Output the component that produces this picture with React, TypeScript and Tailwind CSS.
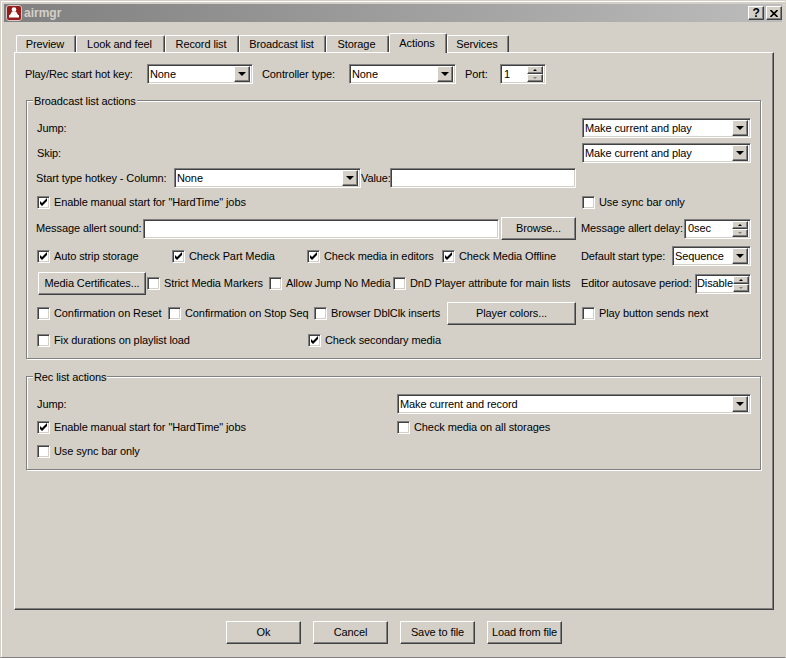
import React, { FC, ReactNode } from 'react';

const sunken =
	'border border-t-[#808080] border-l-[#808080] border-r-white border-b-white shadow-[inset_1px_1px_0_#404040,inset_-1px_-1px_0_#d4d0c8]';
const raised =
	'border border-t-white border-l-white border-r-[#404040] border-b-[#404040] shadow-[inset_-1px_-1px_0_#808080] bg-[#d4d0c8]';

const ArrowButton: FC = () => (
	<span className={`${raised} w-[16px] h-[16px] mr-[2px] flex items-center justify-center shrink-0`}>
		<span className="w-0 h-0 border-x-[4px] border-x-transparent border-t-[4px] border-t-black" />
	</span>
);

const Combo: FC<{ value: string; width: string }> = ({ value, width }) => (
	<div className={`${sunken} ${width} h-[20px] bg-white flex items-center justify-between shrink-0`}>
		<span className="pl-[2px] truncate">{value}</span>
		<ArrowButton />
	</div>
);

const Spin: FC<{ value: string; width: string; tight?: boolean }> = ({ value, width, tight }) => (
	<div className={`${sunken} ${width} h-[20px] bg-white flex items-center justify-between shrink-0`}>
		<span className={tight ? 'pl-[1px]' : 'pl-[3px]'}>{value}</span>
		<span className="flex flex-col mr-[2px] w-[16px] h-[16px] shrink-0">
			<span className={`${raised} h-[8px] flex items-center justify-center`}>
				<span className="w-0 h-0 border-x-[2px] border-x-transparent border-b-[2px] border-b-black" />
			</span>
			<span className={`${raised} h-[8px] flex items-center justify-center`}>
				<span className="w-0 h-0 border-x-[2px] border-x-transparent border-t-[2px] border-t-[#808080]" />
			</span>
		</span>
	</div>
);

const Input: FC<{ width: string }> = ({ width }) => (
	<div className={`${sunken} ${width} h-[20px] bg-white shrink-0`} />
);

const Button: FC<{ label: string; width: string; extra?: string }> = ({ label, width, extra }) => (
	<button className={`${raised} ${width} ${extra ?? ''} h-[23px] flex items-center justify-center shrink-0 text-black`}>
		{label}
	</button>
);

const Check: FC<{ label: string; width?: string; checked?: boolean }> = ({ label, width, checked }) => (
	<label className={`${width ?? ''} flex items-center shrink-0 whitespace-nowrap`}>
		<span className={`${sunken} ml-[1px] mr-[4px] w-[13px] h-[13px] bg-white flex items-center justify-center shrink-0`}>
			{checked && (
				<svg width="9" height="9" viewBox="0 0 9 9">
					<path d="M1 3 V6 L3 8 L8 3 V0 L3 5 Z" fill="black" />
				</svg>
			)}
		</span>
		{label}
	</label>
);

const Label: FC<{ width: string; children: ReactNode }> = ({ width, children }) => (
	<span className={`${width} shrink-0 whitespace-nowrap`}>{children}</span>
);

const Group: FC<{ title: string; height: string; margin: string; children: ReactNode }> = ({
	title,
	height,
	margin,
	children,
}) => (
	<div
		className={`relative ${height} ${margin} ml-[11px] w-[735px] pl-[9px] border border-[#808080] shadow-[inset_1px_1px_0_white,1px_1px_0_white] flex flex-col`}
	>
		<span className="absolute left-[6px] -top-[7px] bg-[#d4d0c8] px-[1px] leading-[14px]">{title}</span>
		{children}
	</div>
);

const tabs = [
	{ name: 'Preview', width: 'w-[60px]' },
	{ name: 'Look and feel', width: 'w-[89px]' },
	{ name: 'Record list', width: 'w-[74px]' },
	{ name: 'Broadcast list', width: 'w-[87px]' },
	{ name: 'Storage', width: 'w-[63px]' },
	{ name: 'Actions', width: 'w-[58px]', active: true },
	{ name: 'Services', width: 'w-[62px]' },
];

const App: FC = () => {
	return (
		<div className="w-[786px] h-[658px] bg-[#d4d0c8] text-[11px] tracking-[-0.1px] text-black font-['Liberation_Sans',sans-serif] border border-t-[#d4d0c8] border-l-[#d4d0c8] border-r-[#d4d0c8] border-b-[#808080] shadow-[inset_1px_1px_0_white] p-[3px] overflow-hidden">
			{/* title bar */}
			<div className="h-[18px] bg-gradient-to-r from-[#808080] to-[#bcbcbc] flex items-center justify-between">
				<div className="flex items-center">
					<svg width="16" height="16" viewBox="0 0 16 16" className="ml-[2px]">
						<rect x="0.5" y="0.5" width="15" height="15" rx="2.5" fill="#961c1c" stroke="#d8c8c8" />
						<circle cx="8" cy="4.5" r="2.3" fill="white" />
						<path d="M6 6.5 H10 L12 10 H4 Z" fill="white" />
						<rect x="3" y="10" width="10" height="2.5" fill="white" />
					</svg>
					<span className="ml-[2px] font-bold text-[#d4d0c8] text-[12px] tracking-normal">airmgr</span>
				</div>
				<div className="flex items-center">
					<span className={`${raised} w-[16px] h-[14px] flex items-center justify-center font-bold text-[12px]`}>?</span>
					<span className={`${raised} w-[16px] h-[14px] ml-[2px] flex items-center justify-center`}>
						<svg width="8" height="7" viewBox="0 0 8 7">
							<path d="M0.5 0 L7.5 7 M7.5 0 L0.5 7" stroke="black" strokeWidth="1.6" />
						</svg>
					</span>
				</div>
			</div>

			{/* tabs */}
			<div className="mt-[11px] ml-[12px] h-[20px] flex items-end">
				{tabs.map((t) => (
					<div
						key={t.name}
						className={`${t.width} ${
							t.active ? 'h-[20px] relative z-10' : 'h-[17px] mb-[1px]'
						} shrink-0 pr-[2px] bg-[#d4d0c8] border-t border-l border-t-white border-l-white border-r border-r-[#404040] rounded-t-[2px] shadow-[inset_-1px_0_0_#808080] flex items-center justify-center`}
					>
						{t.name}
					</div>
				))}
			</div>

			{/* pane */}
			<div className="-mt-[1px] ml-[10px] w-[760px] h-[558px] border border-t-white border-l-white border-r-[#404040] border-b-[#404040] shadow-[inset_-1px_-1px_0_#808080] flex flex-col">
				<div className="mt-[11px] ml-[10px] h-[20px] flex items-center">
					<Label width="w-[122px]">Play/Rec start hot key:</Label>
					<Combo value="None" width="w-[106px]" />
					<Label width="w-[96px] pl-[9px]">Controller type:</Label>
					<Combo value="None" width="w-[107px]" />
					<Label width="w-[44px] pl-[9px]">Port:</Label>
					<Spin value="1" width="w-[46px]" />
				</div>

				<Group title="Broadcast list actions" height="h-[259px]" margin="mt-[16px]">
					<div className="mt-[17px] h-[20px] flex items-center">
						<Label width="w-[546px] pl-[1px]">Jump:</Label>
						<Combo value="Make current and play" width="w-[169px]" />
					</div>
					<div className="mt-[5px] h-[20px] flex items-center">
						<Label width="w-[546px] pl-[1px]">Skip:</Label>
						<Combo value="Make current and play" width="w-[169px]" />
					</div>
					<div className="mt-[5px] h-[20px] flex items-center">
						<Label width="w-[138px]">Start type hotkey - Column:</Label>
						<Combo value="None" width="w-[187px]" />
						<Label width="w-[29px]">Value:</Label>
						<Input width="w-[186px]" />
					</div>
					<div className="mt-[4px] h-[20px] flex items-center">
						<Check label={'Enable manual start for "HardTime" jobs'} width="w-[545px]" checked />
						<Check label="Use sync bar only" />
					</div>
					<div className="mt-[5px] h-[23px] flex items-center">
						<Label width="w-[107px]">Message allert sound:</Label>
						<Input width="w-[356px]" />
						<Button label="Browse..." width="w-[75px]" extra="ml-[2px]" />
						<Label width="w-[103px] ml-[5px]">Message allert delay:</Label>
						<Spin value="0sec" width="w-[67px]" />
					</div>
					<div className="mt-[6px] h-[20px] flex items-center">
						<Check label="Auto strip storage" width="w-[135px]" checked />
						<Check label="Check Part Media" width="w-[135px]" checked />
						<Check label="Check media in editors" width="w-[135px]" checked />
						<Check label="Check Media Offline" width="w-[135px]" checked />
						<Label width="w-[91px] ml-[5px]">Default start type:</Label>
						<Combo value="Sequence" width="w-[79px]" />
					</div>
					<div className="mt-[6px] h-[23px] flex items-center">
						<Button label="Media Certificates..." width="w-[108px]" extra="ml-[2px]" />
						<Check label="Strict Media Markers" width="w-[122px]" />
						<Check label="Allow Jump No Media" width="w-[124px]" />
						<Check label="DnD Player attribute for main lists" width="w-[189px]" />
						<Label width="w-[114px]">Editor autosave period:</Label>
						<Spin value="Disable" width="w-[56px]" tight />
					</div>
					<div className="mt-[7px] h-[23px] flex items-center">
						<Check label="Confirmation on Reset" width="w-[131px]" />
						<Check label="Confirmation on Stop Seq" width="w-[146px]" />
						<Check label="Browser DblClk inserts" width="w-[134px]" />
						<Button label="Player colors..." width="w-[129px]" />
						<div className="ml-[5px]">
							<Check label="Play button sends next" />
						</div>
					</div>
					<div className="mt-[5px] h-[20px] flex items-center">
						<Check label="Fix durations on playlist load" width="w-[271px]" />
						<Check label="Check secondary media" checked />
					</div>
				</Group>

				<Group title="Rec list actions" height="h-[94px]" margin="mt-[17px]">
					<div className="mt-[17px] h-[20px] flex items-center">
						<Label width="w-[361px] pl-[1px]">Jump:</Label>
						<Combo value="Make current and record" width="w-[354px]" />
					</div>
					<div className="mt-[3px] h-[20px] flex items-center">
						<Check label={'Enable manual start for "HardTime" jobs'} width="w-[360px]" checked />
						<Check label="Check media on all storages" />
					</div>
					<div className="mt-[4px] h-[20px] flex items-center">
						<Check label="Use sync bar only" />
					</div>
				</Group>
			</div>

			{/* bottom buttons */}
			<div className="mt-[11px] ml-[222px] flex gap-[12px]">
				<Button label="Ok" width="w-[75px]" />
				<Button label="Cancel" width="w-[75px]" />
				<Button label="Save to file" width="w-[75px]" />
				<Button label="Load from file" width="w-[75px]" />
			</div>
		</div>
	);
};

export default App;
